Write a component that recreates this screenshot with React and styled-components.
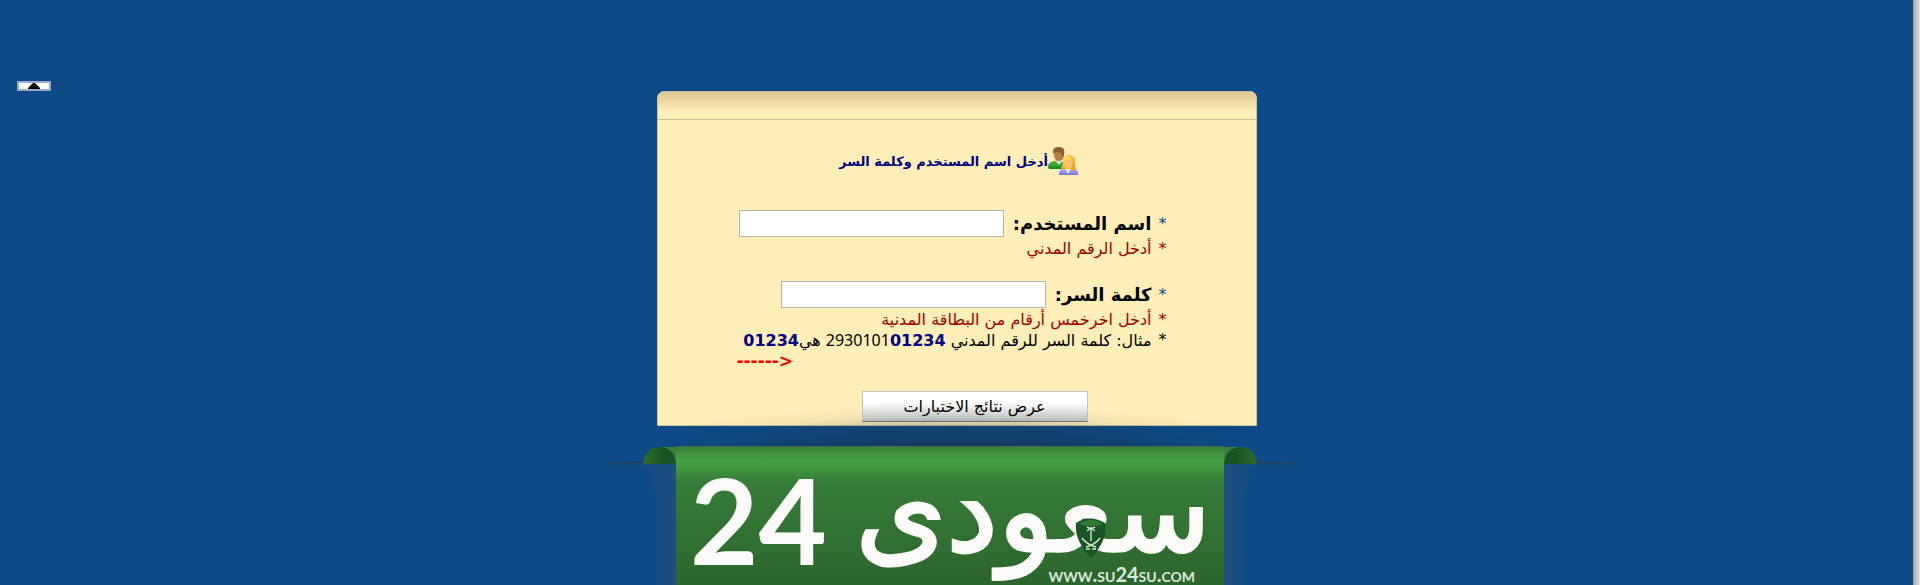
import React from "react";
import styled, { createGlobalStyle } from "styled-components";

const GlobalStyle = createGlobalStyle`
  * {
    box-sizing: border-box;
  }
  body {
    margin: 0;
    background-color: #0d4a87;
    font-family: "DejaVu Sans", Tahoma, sans-serif;
  }
`;
const Page = styled.div`
  display: flex;
  height: 100vh;
  overflow: hidden;
`;
const Main = styled.main`
  flex-grow: 1;
  display: flex;
  flex-direction: column;
  align-items: center;
`;
const Edge = styled.div`
  flex-shrink: 0;
  width: 7px;
  border-left: 1px solid #a0a0a0;
  background: linear-gradient(to right, #adadad, #e2e2e2);
`;
const TopBar = styled.div`
  align-self: stretch;
  display: flex;
  padding: 81px 17px 0;
`;
const CollapseButton = styled.button`
  display: flex;
  align-items: center;
  justify-content: center;
  width: 34px;
  height: 10px;
  padding: 0;
  cursor: pointer;
  border: 2px solid #9ba9cc;
  background-color: #fcfcf8;
`;
const Card = styled.form`
  flex-shrink: 0;
  width: 600px;
  max-width: 100%;
  border: 1px solid #c9c4a2;
  border-radius: 7px 7px 0 0;
  background-color: #feeeb8;
`;
const CardHeader = styled.div`
  height: 28px;
  border-bottom: 1px solid #cbc49a;
  border-radius: 6px 6px 0 0;
  background: linear-gradient(#dfc693, #feeeb8 70%);
`;
const Title = styled.h1`
  display: flex;
  align-items: center;
  justify-content: center;
  height: 32px;
  margin: 25px 0 30px;
  padding-left: 4px;
  color: #000080;
  font-size: 13px;
`;
const Fields = styled.div`
  padding: 0 89px 0 79px;
`;
const Field = styled.div`
  margin-bottom: 19px;
`;
const FieldRow = styled.div`
  display: flex;
  align-items: center;
  height: 32px;
`;
const Label = styled.label`
  margin-left: 9px;
  font-size: 18px;
  font-weight: bold;
  white-space: nowrap;
`;
const TextInput = styled.input`
  width: 265px;
  min-width: 0;
  height: 27px;
  border: 1px solid #b3b3b3;
  background-color: white;
`;
const Star = styled.span`
  flex-shrink: 0;
  width: 15px;
  color: ${(props) => props.color || "inherit"};
  font-size: 16px;
  font-weight: normal;
`;
const Hint = styled.p`
  display: flex;
  margin: 0;
  color: ${(props) => props.color || "#000"};
  font-size: 16px;
  line-height: 20px;
  white-space: nowrap;
`;
const Digits = styled.b`
  color: #000080;
`;
const PlainDigits = styled.span`
  font-family: "Noto Sans", sans-serif;
`;
const Arrow = styled.p`
  margin: 0;
  color: red;
  font-size: 17px;
  font-weight: bold;
  line-height: 20px;
`;
const Actions = styled.div`
  display: flex;
  justify-content: center;
  padding: 20px 0 3px 36px;
`;
const SubmitButton = styled.button`
  width: 226px;
  height: 31px;
  cursor: pointer;
  border: 1px solid #c5c5c5;
  border-bottom-color: #777;
  background: linear-gradient(#fff 35%, #c6c6c6);
  color: #000;
  font-family: inherit;
  font-size: 16px;
`;
const Banner = styled.div`
  position: relative;
  flex-grow: 1;
  display: flex;
  justify-content: center;
  margin-top: 20px;
  padding-right: 14px;
`;
const BannerShadow = styled.div`
  position: absolute;
  top: -40px;
  left: 50%;
  width: 660px;
  height: 40px;
  transform: translateX(-50%);
  pointer-events: none;
  background: radial-gradient(
    ellipse 50% 100% at bottom,
    rgba(24, 36, 44, 0.45),
    rgba(24, 36, 44, 0.25) 45%,
    rgba(24, 36, 44, 0.05) 75%,
    transparent
  );
`;
const Curl = styled.svg`
  display: block;
  flex-shrink: 0;
  width: 71px;
  height: 140px;
  transform: ${(props) => (props.$flip ? "scaleX(-1)" : "none")};
`;
const Cloth = styled.div`
  position: relative;
  flex-shrink: 0;
  width: 548px;
  border-top: 1px solid #48664a;
  background: linear-gradient(
    #3b8039,
    #47a246 14px,
    #439a42 19px,
    #367d37 34px,
    #2c642d 140px
  );
`;
const Logo = styled.svg`
  display: block;
  width: 100%;
  height: 139px;
`;

const UsersIcon = () => (
  <svg width="30" height="30" viewBox="0 0 30 30" aria-hidden="true">
    <defs>
      <linearGradient id="coat" x1="0" y1="0" x2="0" y2="1">
        <stop offset="0" stopColor="#72b957" />
        <stop offset="1" stopColor="#078a1b" />
      </linearGradient>
      <linearGradient id="blouse" x1="0" y1="0" x2="0" y2="1">
        <stop offset="0" stopColor="#b9b2f2" />
        <stop offset="1" stopColor="#7a70d4" />
      </linearGradient>
      <radialGradient id="hair" cx=".35" cy=".3" r=".7">
        <stop offset="0" stopColor="#ffe56a" />
        <stop offset="1" stopColor="#eda31b" />
      </radialGradient>
    </defs>
    <path d="M0 21q0-5 6-6l5-1 7 3v6H2q-2 0-2-2z" fill="url(#coat)" />
    <path d="M8 15l3 4 3-4z" fill="#e5eee0" />
    <ellipse cx="11" cy="9" rx="5" ry="6" fill="#b37c48" />
    <path d="M5 8Q4 1 10 1q8-1 6 8l-2 3q1-6-4-6-4 0-5 2z" fill="#8f5f2b" />
    <path d="M11 29v-3q1-3 5-3h10q4 0 4 4v2z" fill="url(#blouse)" />
    <path d="M13 22q2-3 2-8 1-5 6-5 6 0 6 7 0 5 1 8-4 1-6-1h-4q-2 2-5-1z" fill="url(#hair)" />
    <ellipse cx="20" cy="18" rx="4" ry="5" fill="#fcc36c" />
    <path d="M17 23h6l-3 5z" fill="#e8e8ff" />
  </svg>
);

const RolledEdge = ({ flip }) => (
  <Curl $flip={flip} viewBox="0 0 71 140" aria-hidden="true">
    <defs>
      <linearGradient id="roll">
        <stop offset="0" stopColor="#2c6b2d" />
        <stop offset="0.6" stopColor="#195325" />
      </linearGradient>
      <linearGradient id="shade">
        <stop offset="0" stopColor="#2a4f78" stopOpacity="0" />
        <stop offset="1" stopColor="#2a4f78" stopOpacity="0.7" />
      </linearGradient>
    </defs>
    <path d="M36 19q14 15 14 45v76h21V19z" fill="url(#shade)" />
    <path d="M0 17l38-1v2H0z" fill="#173c63" />
    <path d="M0 18h71" stroke="#35515f" />
    <path d="M55 1h16v16z" fill="#3b8039" />
    <path d="M38 18Q40 1 55 1q15 1 16 17z" fill="url(#roll)" />
  </Curl>
);

const SiteLogo = () => (
  <Logo viewBox="0 0 548 139" preserveAspectRatio="xMinYMin meet">
    <g fill="#fdfbfa">
      <text
        x="14"
        y="118"
        fontFamily="Lato, sans-serif"
        fontSize="118"
        fontWeight="bold"
      >
        24
      </text>
      <text
        x="535"
        y="104"
        direction="rtl"
        fontFamily="DejaVu Sans, sans-serif"
        fontSize="116"
        stroke="#fdfbfa"
        strokeWidth="3"
      >
        سعودى
      </text>
    </g>
    <path
      d="M400 76q14-9 29 0 3 17-14 35-17-18-15-35z"
      fill="#185426"
    />
    <path d="M402 77q13-8 25 0-12 4-25 0z" fill="#327b35" />
    <g stroke="#d5e4d5" strokeWidth="1.4" fill="none">
      <path d="M415 80v14M411 84l4-3 4 3M411 80l4 2 4-2" />
      <path d="M406 91q4 6 14 9M424 91q-4 6-14 9M410 102h4M416 102h4" />
    </g>
    <text
      x="519"
      y="135"
      textAnchor="end"
      fill="#dce8dc"
      fontFamily="Lato, sans-serif"
      fontSize="20"
      fontWeight="bold"
      fontVariant="small-caps"
    >
      www.su24su.com
    </text>
  </Logo>
);

const App = () => (
  <Page>
    <GlobalStyle />
    <Main>
      <TopBar>
        <CollapseButton type="button" aria-label="Collapse">
          <svg width="12" height="6" viewBox="0 0 12 6">
            <path d="M0 6V5l5-5h2l5 5v1z" />
          </svg>
        </CollapseButton>
      </TopBar>
      <Card dir="rtl" onSubmit={(e) => e.preventDefault()}>
        <CardHeader />
        <Title>
          <UsersIcon />
          أدخل اسم المستخدم وكلمة السر
        </Title>
        <Fields>
          <Field>
            <FieldRow>
              <Star color="#0d4a87">*</Star>
              <Label htmlFor="user">اسم المستخدم:</Label>
              <TextInput id="user" type="text" />
            </FieldRow>
            <Hint color="#a00000">
              <Star>*</Star>
              <span>أدخل الرقم المدني</span>
            </Hint>
          </Field>
          <FieldRow>
            <Star color="#0d4a87">*</Star>
            <Label htmlFor="password">كلمة السر:</Label>
            <TextInput id="password" type="password" />
          </FieldRow>
          <Hint color="#a00000">
            <Star>*</Star>
            <span>أدخل اخرخمس أرقام من البطاقة المدنية</span>
          </Hint>
          <Hint>
            <Star>*</Star>
            <span>
              مثال: كلمة السر للرقم المدني <PlainDigits>2930101</PlainDigits>
              <Digits>01234</Digits> هي<Digits>01234</Digits>
            </span>
          </Hint>
          <Arrow dir="ltr">{"------>"}</Arrow>
        </Fields>
        <Actions>
          <SubmitButton type="submit">عرض نتائج الاختبارات</SubmitButton>
        </Actions>
      </Card>
      <Banner>
        <BannerShadow />
        <RolledEdge />
        <Cloth>
          <SiteLogo />
        </Cloth>
        <RolledEdge flip />
      </Banner>
    </Main>
    <Edge />
  </Page>
);
export default App;
